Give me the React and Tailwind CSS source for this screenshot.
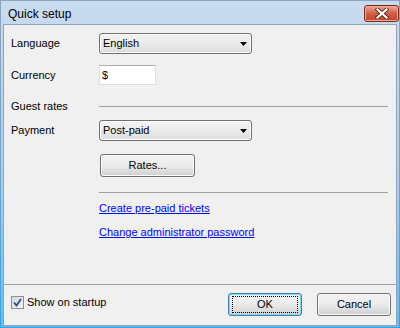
import React from 'react';

const FONT = { fontFamily: '"Liberation Sans", Arial, sans-serif' };

function Combo({ value }) {
  return (
    <div className="relative flex h-[21px] w-[153px] items-center rounded-[3px] border border-[#707070] bg-gradient-to-b from-[#f2f2f2] via-[#ebebeb] to-[#dcdcdc] pl-[3px] shadow-[inset_0_0_0_1px_#fcfcfc]">
      <span className="text-[11px] text-black">{value}</span>
      <svg className="absolute right-[4px] top-[8px]" width="7" height="4" viewBox="0 0 7 4">
        <path d="M0 0 H7 L3.5 4 Z" fill="#000" />
      </svg>
    </div>
  );
}

function Button({ label, def }) {
  return (
    <div
      className={
        'flex h-[23px] items-center justify-center rounded-[3px] border bg-gradient-to-b from-[#f2f2f2] via-[#ebebeb] via-50% to-[#cfcfcf] text-[11px] text-black ' +
        (def
          ? 'border-[#3c7fb1] shadow-[inset_0_0_0_1px_#7fd6f5]'
          : 'border-[#707070] shadow-[inset_0_0_0_1px_#fcfcfc]')
      }
    >
      {def ? (
        <div className="flex h-[17px] w-[66px] items-center justify-center border border-dotted border-black">
          {label}
        </div>
      ) : (
        label
      )}
    </div>
  );
}

function Separator({ className = '' }) {
  return <div className={'h-px bg-[#a0a0a0] ' + className} />;
}

export default function App() {
  return (
    <div style={FONT} className="h-[328px] w-[400px] bg-gradient-to-b from-[#8ea3bb] to-[#2ea6e5] p-px">
      <div className="flex h-full flex-col bg-gradient-to-b from-[#c9dbef] via-[#b7cfea] to-[#63bdec] px-[2px] pb-[1px]">
        {/* Title bar */}
        <div className="flex h-[23px] shrink-0 items-start justify-between">
          <span className="mt-[6px] pl-[5px] text-[12px] leading-[14px] text-black">Quick setup</span>
          <div className="-mr-[2px] mt-[4px] flex h-[17px] w-[35px] items-center justify-center rounded-[3px] border border-[#7d2b1d] bg-gradient-to-b from-[#e9a999] via-[#d35c44] via-50% to-[#c4452c] shadow-[inset_0_0_0_1px_#eea896]">
            <svg width="14" height="11" viewBox="0 0 14 11">
              <path d="M2.5 1.5 L11.5 9.5 M11.5 1.5 L2.5 9.5" stroke="#5a2a22" strokeWidth="4" strokeLinecap="square" />
              <path d="M2.5 1.5 L11.5 9.5 M11.5 1.5 L2.5 9.5" stroke="#ffffff" strokeWidth="2.2" strokeLinecap="square" />
            </svg>
          </div>
        </div>

        {/* Client area */}
        <div className="flex flex-1 flex-col border border-[#8ea2b8] bg-[#f0f0f0] text-[11px] text-black">
          <div className="flex flex-1 flex-col pl-[7px] pr-[8px]">
            <div className="mt-[8px] flex h-[21px] items-center">
              <span className="w-[88px]">Language</span>
              <Combo value="English" />
            </div>
            <div className="mt-[11px] flex h-[20px] items-center">
              <span className="w-[88px]">Currency</span>
              <div className="flex h-[20px] w-[57px] items-center border border-[#dbdfe6] border-t-[#abadb3] bg-white pl-[2px]">
                $
              </div>
            </div>
            <div className="mt-[13px] flex h-[17px] items-center">
              <span className="w-[88px]">Guest rates</span>
              <Separator className="flex-1" />
            </div>
            <div className="mt-[5px] flex h-[21px] items-center">
              <span className="w-[88px]">Payment</span>
              <Combo value="Post-paid" />
            </div>
            <div className="ml-[89px] mt-[13px] w-[95px]">
              <Button label="Rates..." />
            </div>
            <Separator className="ml-[88px] mt-[15px]" />
            <div className="ml-[88px] mt-[8px] leading-[14px] text-[#0000ff] underline">Create pre-paid tickets</div>
            <div className="ml-[88px] mt-[10px] leading-[14px] text-[#0000ff] underline">Change administrator password</div>
          </div>

          <Separator />
          <div className="flex h-[40px] items-start pl-[7px] pr-[5px]">
            <div className="mt-[9px] flex items-center">
              <div className="flex h-[13px] w-[13px] items-center justify-center border border-[#8e8f8f] bg-gradient-to-br from-[#d6d6d6] to-[#f6f6f6]">
                <svg width="9" height="9" viewBox="0 0 9 9">
                  <path d="M1 4.5 L3.5 7.5 L8 1" fill="none" stroke="#2a4b9c" strokeWidth="1.8" />
                </svg>
              </div>
              <span className="ml-[3px]">Show on startup</span>
            </div>
            <div className="ml-auto mt-[8px] flex gap-[15px]">
              <div className="w-[74px]">
                <Button label="OK" def />
              </div>
              <div className="w-[74px]">
                <Button label="Cancel" />
              </div>
            </div>
          </div>
        </div>
      </div>
    </div>
  );
}
